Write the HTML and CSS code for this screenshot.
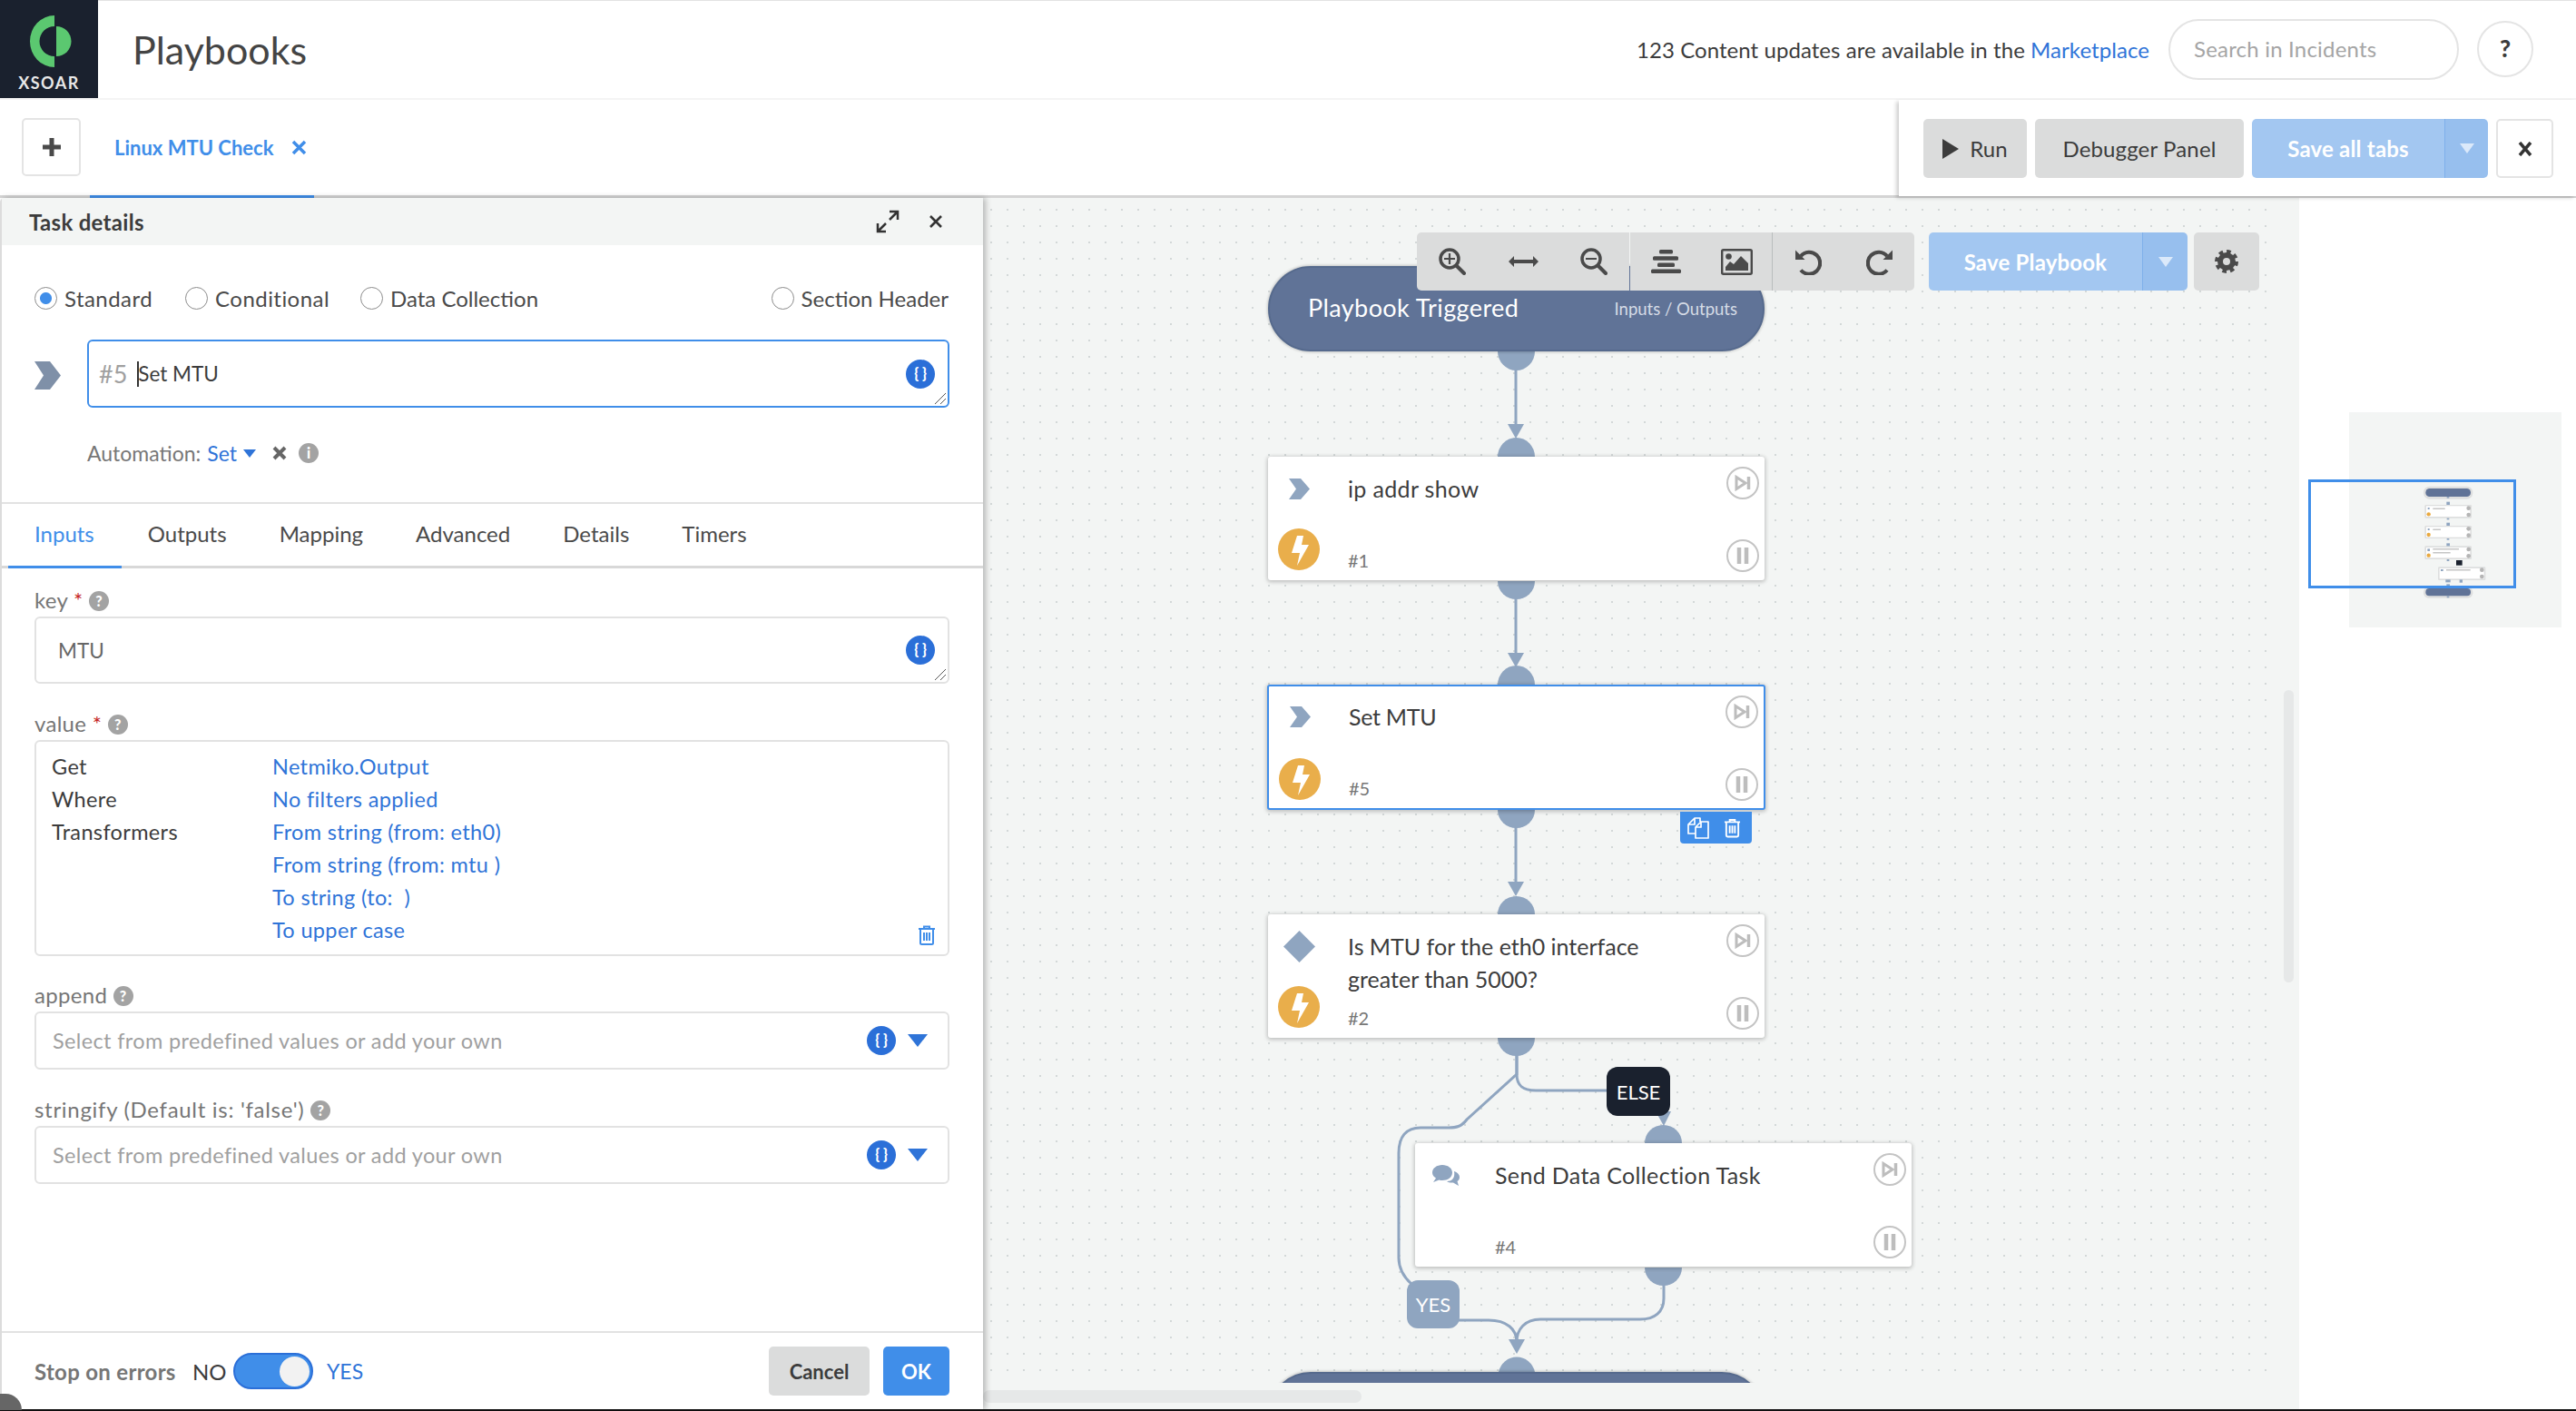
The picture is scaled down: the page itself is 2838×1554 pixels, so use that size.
FILE: index.html
```html
<!DOCTYPE html>
<html lang="en">
<head>
    <meta charset="UTF-8">
    <title>Playbooks</title>
    <link rel="stylesheet" href="styles.css">
</head>
<body>

<!-- Top bar -->
<header class="topbar">
    <div class="logo">
        <svg width="108" height="78" viewBox="0 0 108 78">
            <path fill="#5bc870" d="M60 17A27 28.500 0 0 0 60 74V62A16.500 16.500 0 0 1 60 29Z"/>
            <path fill="#5bc870" d="M62 29A16.500 16.500 0 0 1 62 62Z"/>
        </svg>
        <span class="logo-text">XSOAR</span>
    </div>
    <h1 class="page-title">Playbooks</h1>
    <div class="updates">123 Content updates are available in the <a class="link">Marketplace</a></div>
    <div class="search">Search in Incidents</div>
    <div class="help-btn">?</div>
</header>

<!-- Tabs and run buttons -->
<div class="tabbar">
    <button class="add-tab">
        <svg width="20" height="20" viewBox="0 0 20 20"><path fill="#4a4a4a" d="M7.500 0h5v7.500H20v5h-7.500V20h-5v-7.500H0v-5h7.500z"/></svg>
    </button>
    <div class="tab">
        <span>Linux MTU Check</span>
        <svg width="17" height="17" viewBox="0 0 17 17"><path stroke="#408ee9" stroke-width="3.500" d="M2 2l13 13M15 2L2 15"/></svg>
    </div>
    <div class="run-panel">
        <button class="btn btn-gray btn-run">
            <svg width="18" height="22" viewBox="0 0 18 22"><path fill="#3c3c3c" d="M0 0l18 11L0 22z"/></svg>
            Run
        </button>
        <button class="btn btn-gray btn-debug">Debugger Panel</button>
        <div class="split split-tabs">
            <button class="split-main">Save all tabs</button>
            <button class="split-arrow"><i class="caret caret-white"></i></button>
        </div>
        <button class="close-btn">
            <svg width="16" height="16" viewBox="0 0 16 16"><path stroke="#333" stroke-width="3.500" d="M2 1l12 14M14 1L2 15"/></svg>
        </button>
    </div>
</div>

<div class="workspace">

    <!-- Task details panel -->
    <section class="task-panel">
        <div class="task-head">
            <span>Task details</span>
            <svg class="head-icon" width="26" height="26" viewBox="0 0 26 26"><path fill="none" stroke="#333" stroke-width="2.500" d="M15 2h9v9M24 2L15 11M11 24H2v-9M2 24l9-9"/></svg>
            <svg class="head-icon" width="16" height="16" viewBox="0 0 16 16"><path stroke="#333" stroke-width="2.600" d="M2 2l12 12M14 2L2 14"/></svg>
        </div>

        <div class="type-row">
            <label class="radio radio-on"><i></i>Standard</label>
            <label class="radio"><i></i>Conditional</label>
            <label class="radio radio-data"><i></i>Data Collection</label>
            <label class="radio radio-last"><i></i>Section Header</label>
        </div>

        <div class="title-row">
            <svg width="29" height="31" viewBox="0 0 29 31"><path fill="#7f90a8" d="M0 0h17l12 15.500L17 31H0l10-15.500z"/></svg>
            <div class="input input-title">
                <span class="task-no">#5</span><span class="caret-line"></span><span>Set MTU</span>
                <span class="code-btn">{ }</span>
                <svg class="resize" width="14" height="14" viewBox="0 0 14 14"><path stroke="#555" d="M13 1L1 13M13 7l-6 6"/></svg>
            </div>
        </div>

        <div class="automation">
            <span>Automation:</span> <a class="link">Set</a>
            <i class="caret caret-small"></i>
            <svg width="16" height="16" viewBox="0 0 16 16"><path stroke="#666" stroke-width="4" d="M2 2l12 12M14 2L2 14"/></svg>
            <span class="hint">i</span>
        </div>

        <nav class="task-tabs">
            <a class="task-tab task-tab-on">Inputs</a>
            <a class="task-tab">Outputs</a>
            <a class="task-tab">Mapping</a>
            <a class="task-tab">Advanced</a>
            <a class="task-tab">Details</a>
            <a class="task-tab">Timers</a>
        </nav>

        <div class="fields">
            <div class="field">
                <div class="field-label">key <b>*</b> <span class="hint">?</span></div>
                <div class="input input-key">
                    <span>MTU</span>
                    <span class="code-btn">{ }</span>
                    <svg class="resize" width="14" height="14" viewBox="0 0 14 14"><path stroke="#555" d="M13 1L1 13M13 7l-6 6"/></svg>
                </div>
            </div>

            <div class="field field-tight">
                <div class="field-label">value <b>*</b> <span class="hint">?</span></div>
                <div class="value-box">
                    <div class="value-row"><span>Get</span><a class="link">Netmiko.Output</a></div>
                    <div class="value-row"><span>Where</span><a class="link">No filters applied</a></div>
                    <div class="value-row"><span>Transformers</span><a class="link">From string (from: eth0)</a></div>
                    <div class="value-row"><span></span><a class="link">From string (from: mtu )</a></div>
                    <div class="value-row"><span></span><a class="link">To string (to:&nbsp; )</a></div>
                    <div class="value-row"><span></span><a class="link">To upper case</a></div>
                    <svg class="value-trash" width="20" height="22" viewBox="0 0 20 22"><path fill="none" stroke="#408ee9" stroke-width="2" d="M1 4h18M7 4V1.500h6V4M3 4v15.500q0 1.500 1.500 1.500h11q1.500 0 1.500-1.500V4M7 8v9M10 8v9M13 8v9"/></svg>
                </div>
            </div>

            <div class="field">
                <div class="field-label">append <span class="hint">?</span></div>
                <div class="input input-select">
                    <span class="placeholder">Select from predefined values or add your own</span>
                    <span class="code-btn">{ }</span>
                    <i class="caret caret-blue"></i>
                </div>
            </div>

            <div class="field">
                <div class="field-label field-label-long">stringify (Default is: 'false') <span class="hint">?</span></div>
                <div class="input input-select">
                    <span class="placeholder">Select from predefined values or add your own</span>
                    <span class="code-btn">{ }</span>
                    <i class="caret caret-blue"></i>
                </div>
            </div>
        </div>

        <div class="task-foot">
            <span class="stop-label">Stop on errors</span>
            <span class="no-label">NO</span>
            <span class="toggle"><i></i></span>
            <a class="link yes-label">YES</a>
            <button class="btn btn-gray btn-cancel">Cancel</button>
            <button class="btn btn-ok">OK</button>
        </div>
    </section>

    <!-- Playbook canvas -->
    <main class="canvas">
        <div class="graph">
            <svg class="wires" width="1450" height="1305" viewBox="1083 218 1450 1305">
                <g fill="none" stroke="#8fa5c0" stroke-width="3">
                    <path d="M1670 405V470"/>
                    <path d="M1670 655V722"/>
                    <path d="M1670 908V974"/>
                    <path d="M1671 1160V1183C1671 1195 1677 1201 1692 1201H1772"/>
                    <path d="M1671 1160V1183L1616 1233C1610 1241 1604 1242 1596 1242H1565C1549 1242 1541 1252 1541 1270V1385C1541 1397 1546 1406 1555 1414"/>
                    <path d="M1605 1454H1640C1660 1454 1671 1464 1671 1478"/>
                    <path d="M1833 1412V1430C1833 1445 1823 1453 1807 1453H1697C1680 1453 1671 1464 1671 1478"/>
                </g>
                <g fill="#8fa5c0">
                    <path d="M1650 387H1691A20.500 21 0 0 1 1650 387Z"/>
                    <path d="M1650 503A20.500 21 0 0 1 1691 503Z"/>
                    <path d="M1650 640H1691A20.500 20 0 0 1 1650 640Z"/>
                    <path d="M1650 754A20.500 21 0 0 1 1691 754Z"/>
                    <path d="M1650 892H1691A20.500 20 0 0 1 1650 892Z"/>
                    <path d="M1650 1007A20.500 20 0 0 1 1691 1007Z"/>
                    <path d="M1650 1143H1691A20.500 20 0 0 1 1650 1143Z"/>
                    <path d="M1812 1259A20.500 20 0 0 1 1853 1259Z"/>
                    <path d="M1812 1396H1853A20.500 20 0 0 1 1812 1396Z"/>
                    <path d="M1651 1511A20.500 21 0 0 1 1691 1511Z"/>
                    <path d="M1661 467H1679L1670 483Z"/>
                    <path d="M1661 719H1679L1670 735Z"/>
                    <path d="M1661 971H1679L1670 987Z"/>
                    <path d="M1662 1475H1680L1671 1491Z"/>
                    <path d="M1824 1224H1841L1833 1240Z"/>
                </g>
            </svg>

            <div class="pill pill-start">
                <span class="pill-title">Playbook Triggered</span>
                <span class="pill-link">Inputs / Outputs</span>
            </div>

            <div class="node node-1">
                <div class="node-left">
                    <svg width="23" height="23" viewBox="0 0 23 23"><path fill="#8fa5c0" d="M0 0h13l10 11.500L13 23H0l8-11.500z"/></svg>
                    <span class="bolt"><svg width="46" height="46" viewBox="0 0 46 46"><path fill="#fff" d="M21 8h7l-2 10h8L21 41l3-14h-9z"/></svg></span>
                </div>
                <div class="node-main"><div class="node-title">ip addr show</div><div class="node-no">#1</div></div>
                <div class="node-right">
                    <span class="round"><svg width="18" height="18" viewBox="0 0 18 18"><path fill="none" stroke="#bdbdbd" stroke-width="3" d="M2 2.500L12 9 2 15.500z"/><path stroke="#bdbdbd" stroke-width="3.500" d="M15.500 2v14"/></svg></span>
                    <span class="round"><svg width="14" height="18" viewBox="0 0 14 18"><path stroke="#bdbdbd" stroke-width="4.500" d="M3 0v18M11 0v18"/></svg></span>
                </div>
            </div>

            <div class="node node-2 node-on">
                <div class="node-left">
                    <svg width="23" height="23" viewBox="0 0 23 23"><path fill="#8fa5c0" d="M0 0h13l10 11.500L13 23H0l8-11.500z"/></svg>
                    <span class="bolt"><svg width="46" height="46" viewBox="0 0 46 46"><path fill="#fff" d="M21 8h7l-2 10h8L21 41l3-14h-9z"/></svg></span>
                </div>
                <div class="node-main"><div class="node-title">Set MTU</div><div class="node-no">#5</div></div>
                <div class="node-right">
                    <span class="round"><svg width="18" height="18" viewBox="0 0 18 18"><path fill="none" stroke="#bdbdbd" stroke-width="3" d="M2 2.500L12 9 2 15.500z"/><path stroke="#bdbdbd" stroke-width="3.500" d="M15.500 2v14"/></svg></span>
                    <span class="round"><svg width="14" height="18" viewBox="0 0 14 18"><path stroke="#bdbdbd" stroke-width="4.500" d="M3 0v18M11 0v18"/></svg></span>
                </div>
            </div>

            <div class="node-actions">
                <svg width="24" height="24" viewBox="0 0 24 24"><path fill="none" stroke="#fff" stroke-width="1.700" stroke-linejoin="round" d="M9 18H1V8l7-7h6v4M8 1v7H1M9 23V11l6-6h8v18zM15 5v6H9"/></svg>
                <svg width="19" height="22" viewBox="0 0 20 22"><path fill="none" stroke="#fff" stroke-width="2" d="M1 4h18M7 4V1.500h6V4M3 4v15.500q0 1.500 1.500 1.500h11q1.500 0 1.500-1.500V4M7 8v9M10 8v9M13 8v9"/></svg>
            </div>

            <div class="node node-3">
                <div class="node-left">
                    <svg width="35" height="35" viewBox="0 0 35 35"><path fill="#8fa5c0" d="M17.500 0L35 17.500 17.500 35 0 17.500z"/></svg>
                    <span class="bolt"><svg width="46" height="46" viewBox="0 0 46 46"><path fill="#fff" d="M21 8h7l-2 10h8L21 41l3-14h-9z"/></svg></span>
                </div>
                <div class="node-main"><div class="node-title">Is MTU for the eth0 interface greater than 5000?</div><div class="node-no">#2</div></div>
                <div class="node-right">
                    <span class="round"><svg width="18" height="18" viewBox="0 0 18 18"><path fill="none" stroke="#bdbdbd" stroke-width="3" d="M2 2.500L12 9 2 15.500z"/><path stroke="#bdbdbd" stroke-width="3.500" d="M15.500 2v14"/></svg></span>
                    <span class="round"><svg width="14" height="18" viewBox="0 0 14 18"><path stroke="#bdbdbd" stroke-width="4.500" d="M3 0v18M11 0v18"/></svg></span>
                </div>
            </div>

            <div class="node node-4">
                <div class="node-left">
                    <svg width="30" height="24" viewBox="0 0 30 24"><path fill="#8fa5c0" d="M11 0c6 0 11 3.500 11 8.500S17 17 11 17c-1.500 0-2.500 0-3.500-.5L1 19l3-4.500C1.500 13 0 11 0 8.500 0 3.500 5 0 11 0z"/><path fill="#8fa5c0" d="M24 7c3.500 1 6 3.500 6 6.500 0 2-1 3.500-2.500 4.500l1.500 5-6-3.500c-2 .3-5.500 0-7-1.500 5 0 9.500-3 8-11z"/></svg>
                </div>
                <div class="node-main"><div class="node-title">Send Data Collection Task</div><div class="node-no">#4</div></div>
                <div class="node-right">
                    <span class="round"><svg width="18" height="18" viewBox="0 0 18 18"><path fill="none" stroke="#bdbdbd" stroke-width="3" d="M2 2.500L12 9 2 15.500z"/><path stroke="#bdbdbd" stroke-width="3.500" d="M15.500 2v14"/></svg></span>
                    <span class="round"><svg width="14" height="18" viewBox="0 0 14 18"><path stroke="#bdbdbd" stroke-width="4.500" d="M3 0v18M11 0v18"/></svg></span>
                </div>
            </div>

            <div class="edge-tag edge-else">ELSE</div>
            <div class="edge-tag edge-yes">YES</div>

            <div class="pill pill-end"></div>

            <!-- Canvas buttons -->
            <div class="tools">
                <div class="tool-group tool-group-a">
                    <span class="tool"><svg width="30" height="30" viewBox="0 0 30 30"><circle cx="12" cy="12" r="10" fill="none" stroke="#4a4a4a" stroke-width="3.500"/><path stroke="#4a4a4a" stroke-width="4" stroke-linecap="round" d="M20 20l8 8"/><path stroke="#4a4a4a" stroke-width="2.200" d="M6 12h12M12 6v12"/></svg></span>
                    <span class="tool"><svg width="33" height="12" viewBox="0 0 33 12"><path fill="#4a4a4a" d="M0 6l6-6v4h21V0l6 6-6 6V8H6v4z"/></svg></span>
                    <span class="tool"><svg width="30" height="30" viewBox="0 0 30 30"><circle cx="12" cy="12" r="10" fill="none" stroke="#4a4a4a" stroke-width="3.500"/><path stroke="#4a4a4a" stroke-width="4" stroke-linecap="round" d="M20 20l8 8"/><path stroke="#4a4a4a" stroke-width="2.200" d="M6 12h12"/></svg></span>
                </div>
                <div class="tool-group tool-group-b">
                    <span class="tool"><svg width="33" height="26" viewBox="0 0 33 26"><g fill="#4a4a4a"><rect x="9" y="0" width="15" height="4.500" rx="1.500"/><rect x="2" y="7.300" width="28" height="4.500" rx="1.500"/><rect x="7" y="14.400" width="19" height="4.500" rx="1.500"/><rect x="0" y="21.500" width="33" height="4.500" rx="1.500"/></g></svg></span>
                    <span class="tool"><svg width="35" height="29" viewBox="0 0 35 29"><rect x="1.200" y="1.200" width="32.600" height="26.600" rx="1.500" fill="none" stroke="#4a4a4a" stroke-width="2.400"/><circle cx="8.500" cy="8.500" r="3.300" fill="#4a4a4a"/><path fill="#4a4a4a" d="M5 24v-4l5-6 4 3 8-9 8 8v8z"/></svg></span>
                </div>
                <div class="tool-group">
                    <span class="tool"><svg width="29" height="29" viewBox="0 0 29 29"><path fill="none" stroke="#4a4a4a" stroke-width="4.200" d="M6 8A12 12 0 1 1 6 23.500"/><path fill="#4a4a4a" d="M0 1.500V12h10.500z"/></svg></span>
                    <span class="tool"><svg width="29" height="29" viewBox="0 0 29 29"><path fill="none" stroke="#4a4a4a" stroke-width="4.200" d="M23 8A12 12 0 1 0 23 23.500"/><path fill="#4a4a4a" d="M29 1.500V12H18.500z"/></svg></span>
                </div>
            </div>
            <div class="split split-save">
                <button class="split-main">Save Playbook</button>
                <button class="split-arrow"><i class="caret caret-white"></i></button>
            </div>
            <button class="gear">
                <svg width="26" height="26" viewBox="0 0 26 26"><circle cx="13" cy="13" r="7" fill="none" stroke="#4a4a4a" stroke-width="6"/><circle cx="13" cy="13" r="11" fill="none" stroke="#4a4a4a" stroke-width="4" stroke-dasharray="4.600 4"/></svg>
            </button>
        </div>
        <div class="scroll-v"></div>
        <div class="scroll-h"></div>
    </main>

    <!-- Minimap -->
    <aside class="minimap">
        <div class="mini-box">
            <svg width="234" height="237" viewBox="264 102 702 711">
                <g fill="#dedfdf">
                    <rect x="510" y="347" width="163" height="42" rx="20"/>
                    <rect x="514" y="408" width="155" height="44" rx="4"/>
                    <rect x="514" y="477" width="155" height="42" rx="4"/>
                    <rect x="514" y="544" width="155" height="44" rx="4"/>
                    <rect x="558" y="613" width="157" height="44" rx="4"/>
                    <rect x="510" y="680" width="163" height="36" rx="16"/>
                </g>
                <g fill="#607397">
                    <rect x="517" y="354" width="149" height="27" rx="13"/>
                    <rect x="517" y="684" width="149" height="25" rx="12"/>
                </g>
                <g fill="#fff">
                    <rect x="519" y="412" width="145" height="35"/>
                    <rect x="519" y="481" width="145" height="34"/>
                    <rect x="519" y="549" width="145" height="34"/>
                    <rect x="563" y="618" width="147" height="34"/>
                </g>
                <g fill="#b5b5b5">
                    <circle cx="659" cy="419" r="7"/><circle cx="659" cy="441" r="7"/>
                    <circle cx="659" cy="487" r="7"/><circle cx="659" cy="509" r="7"/>
                    <circle cx="659" cy="555" r="7"/><circle cx="659" cy="577" r="7"/>
                    <circle cx="703" cy="623" r="7"/><circle cx="703" cy="645" r="7"/>
                </g>
                <g fill="#e9a93f">
                    <circle cx="527" cy="439" r="6.500"/><circle cx="527" cy="507" r="6.500"/><circle cx="527" cy="575" r="6.500"/>
                </g>
                <g fill="#8fa5c0">
                    <rect x="524" y="417" width="6" height="6"/><rect x="524" y="486" width="6" height="6"/><rect x="523" y="553" width="8" height="8"/><rect x="567" y="621" width="8" height="6"/>
                    <rect x="586" y="398" width="11" height="10"/><rect x="586" y="467" width="11" height="10"/><rect x="586" y="535" width="11" height="9"/>
                    <rect x="583" y="655" width="16" height="9"/><rect x="629" y="655" width="10" height="10"/><rect x="586" y="670" width="11" height="10"/>
                    <rect x="587" y="381" width="8" height="5"/><rect x="587" y="452" width="8" height="5"/><rect x="587" y="519" width="8" height="5"/><rect x="587" y="588" width="8" height="6"/><rect x="587" y="709" width="8" height="6"/>
                </g>
                <g fill="#a9a9a9">
                    <rect x="541" y="419" width="40" height="3"/><rect x="541" y="488" width="26" height="3"/><rect x="541" y="553" width="86" height="3"/><rect x="541" y="565" width="58" height="3"/><rect x="585" y="622" width="80" height="3"/>
                </g>
                <rect x="618" y="591" width="20" height="17" fill="#1a212e"/>
            </svg>
        </div>
        <div class="mini-view"></div>
    </aside>
</div>

<div class="bottom-edge"></div>
<div class="window-corner"></div>

</body>
</html>
```

FILE: styles.css
```css
* {
    box-sizing: border-box;
}

html, body {
    margin: 0;
    height: 1554px;
    overflow: hidden;
}

body {
    font-family: "Lato", "Liberation Sans", sans-serif;
    font-size: 24px;
    color: #3c3c3c;
    background-color: #fff;
    display: flex;
    flex-direction: column;
    position: relative;
}

button {
    font-family: inherit;
    border: none;
    cursor: pointer;
    padding: 0;
}

.link {
    color: #2f74d8;
    text-decoration: none;
}

/* Top bar */
.topbar {
    height: 110px;
    flex-shrink: 0;
    display: flex;
    align-items: center;
    border-top: 1px solid #e2e2e2;
    border-bottom: 2px solid #f4f4f4;
    padding-bottom: 1px;
}

.logo {
    width: 108px;
    height: 108px;
    margin-top: -1px;
    background-color: #1a212e;
    display: flex;
    flex-direction: column;
    align-items: center;
    align-self: flex-start;
}

.logo svg {
    flex-shrink: 0;
}

.logo-text {
    color: #e8e8e8;
    font-size: 18px;
    font-weight: 700;
    letter-spacing: 1.500px;
    margin-top: 2px;
}

.page-title {
    margin: 0 0 0 38px;
    font-size: 43px;
    font-weight: 400;
    color: #444;
    flex: 1;
}

.updates {
    font-size: 24px;
    letter-spacing: 0.06px;
    margin-right: 21px;
}

.search {
    width: 320px;
    height: 67px;
    border: 2px solid #e4e4e4;
    border-radius: 34px;
    padding-left: 26px;
    line-height: 62px;
    color: #a5a5a5;
    font-size: 24px;
    letter-spacing: 0.2px;
}

.help-btn {
    width: 62px;
    height: 62px;
    margin: 0 47px 0 20px;
    border: 2px solid #e4e4e4;
    border-radius: 50%;
    text-align: center;
    line-height: 56px;
    font-weight: 900;
    font-size: 26px;
}

/* Tabs */
.tabbar {
    height: 108px;
    flex-shrink: 0;
    display: flex;
    align-items: flex-start;
    border-bottom: 3px solid #d4d4d4;
    position: relative;
}

.add-tab {
    width: 65px;
    height: 64px;
    margin: 20px 0 0 24px;
    background-color: #fff;
    border: 2px solid #e4e4e4;
    border-radius: 5px;
    display: flex;
    align-items: center;
    justify-content: center;
}

.tab {
    width: 247px;
    height: 108px;
    margin-left: 10px;
    padding-left: 27px;
    display: flex;
    align-items: center;
    gap: 20px;
    color: #408ee9;
    font-size: 22px;
    font-weight: 700;
    border-bottom: 3px solid #408ee9;
}

.run-panel {
    margin-left: auto;
    width: 746px;
    height: 106px;
    padding: 21px 25px 0 27px;
    background-color: #fff;
    display: flex;
    align-items: flex-start;
    box-shadow: -3px 2px 4px rgba(0, 0, 0, 0.18);
    z-index: 3;
    position: relative;
}

.btn {
    border-radius: 5px;
    font-size: 24px;
    height: 65px;
}

.btn-gray {
    background-color: #dbdcdc;
    color: #3c3c3c;
}

.btn-run {
    width: 114px;
    display: flex;
    align-items: center;
    justify-content: center;
    gap: 12px;
}

.btn-debug {
    width: 230px;
    margin: 0 9px;
    letter-spacing: 0.15px;
}

.split {
    display: flex;
    border-radius: 5px;
    overflow: hidden;
}

.split-main {
    background-color: #a3c7f1;
    color: #fff;
    font-size: 24px;
    font-weight: 700;
    letter-spacing: 0.2px;
}

.split-arrow {
    background-color: #97bfee;
    border-left: 1px solid #7fb0ea;
    display: flex;
    align-items: center;
    justify-content: center;
}

.split-tabs {
    width: 260px;
    height: 65px;
}

.split-tabs .split-main {
    width: 212px;
}

.split-tabs .split-arrow {
    width: 48px;
}

.close-btn {
    width: 63px;
    height: 65px;
    margin-left: 9px;
    background-color: #fff;
    border: 2px solid #e4e4e4;
    border-radius: 5px;
    display: flex;
    align-items: center;
    justify-content: center;
}

.caret {
    display: inline-block;
    width: 0;
    height: 0;
    border-left: 8px solid transparent;
    border-right: 8px solid transparent;
    border-top: 11px solid #fff;
}

.caret-white {
    border-top-color: #dbe9fa;
}

.caret-blue {
    border-left-width: 11px;
    border-right-width: 11px;
    border-top: 14px solid #2f74d8;
}

.caret-small {
    border-left-width: 7px;
    border-right-width: 7px;
    border-top: 9px solid #2f74d8;
}

/* Main area */
.workspace {
    flex: 1;
    display: flex;
    min-height: 0;
}

/* Task panel */
.task-panel {
    width: 1083px;
    flex-shrink: 0;
    display: flex;
    flex-direction: column;
    background-color: #fff;
    border-left: 2px solid #dcdcdc;
    border-top-left-radius: 5px;
    box-shadow: 3px 0 6px rgba(0, 0, 0, 0.25);
    z-index: 2;
}

.task-head {
    height: 52px;
    flex-shrink: 0;
    background-color: #f3f5f4;
    display: flex;
    align-items: center;
    padding: 0 44px 0 30px;
    font-weight: 700;
    font-size: 24px;
    gap: 32px;
}

.task-head span {
    flex: 1;
    letter-spacing: 0.3px;
}

.type-row {
    display: flex;
    align-items: center;
    height: 26px;
    margin: 45px 38px 0 36px;
    gap: 36px;
}

.radio {
    display: flex;
    align-items: center;
    gap: 8px;
    font-size: 24px;
    color: #4a4a4a;
    letter-spacing: 0.45px;
}

.radio i {
    width: 25px;
    height: 25px;
    border: 1px solid #8c8c8c;
    border-radius: 50%;
    flex-shrink: 0;
}

.radio-on i {
    background: radial-gradient(circle, #408ee9 0 6px, #fff 7px);
}

.radio-data {
    margin-left: -2px;
    letter-spacing: 0;
}

.radio-last {
    margin-left: auto;
    letter-spacing: 0;
}

.title-row {
    display: flex;
    align-items: flex-start;
    margin: 33px 37px 0 36px;
    gap: 29px;
}

.title-row svg:first-child {
    flex-shrink: 0;
    margin-top: 24px;
}

.input {
    position: relative;
    border: 2px solid #e2e2e2;
    border-radius: 6px;
    background-color: #fff;
    display: flex;
    align-items: center;
    font-size: 22.500px;
}

.input-title {
    flex: 1;
    height: 75px;
    border-color: #408ee9;
    padding: 0 0 0 11px;
}

.task-no {
    color: #a0a0a0;
    font-size: 27px;
    margin-right: 11px;
}

.caret-line {
    width: 2px;
    height: 28px;
    background-color: #333;
    margin-right: -1px;
}

.code-btn {
    width: 32px;
    height: 32px;
    border-radius: 50%;
    background-color: #2b6fd8;
    color: #fff;
    font-size: 16px;
    font-weight: 900;
    line-height: 30px;
    text-align: center;
    white-space: nowrap;
    flex-shrink: 0;
    margin-left: auto;
    margin-right: 14px;
}

.resize {
    position: absolute;
    right: 1px;
    bottom: 1px;
}

.automation {
    display: flex;
    align-items: center;
    gap: 7px;
    height: 30px;
    margin: 35px 0 0 94px;
    font-size: 23px;
    color: #777;
}

.automation .caret {
    margin: 0 11px 0 0;
}

.hint {
    width: 22px;
    height: 22px;
    border-radius: 50%;
    background-color: #a3a3a3;
    color: #fff;
    display: inline-block;
    text-align: center;
    font-size: 16px;
    font-weight: 900;
    line-height: 22px;
    vertical-align: 2px;
    letter-spacing: 0;
}

.automation .hint {
    margin-left: 6px;
}

.task-tabs {
    margin-top: 39px;
    height: 73px;
    flex-shrink: 0;
    display: flex;
    border-top: 2px solid #e2e2e2;
    border-bottom: 3px solid #d8d8d8;
    padding-left: 7px;
}

.task-tab {
    height: 71px;
    line-height: 66px;
    padding: 0 29px;
    color: #4a4a4a;
    font-size: 24px;
}

.task-tab-on {
    color: #408ee9;
    border-bottom: 3px solid #408ee9;
    padding-right: 30px;
}

.fields {
    padding: 20px 37px 0 36px;
}

.field {
    margin-bottom: 29px;
}

.field-tight {
    margin-bottom: 28px;
}

.field-label {
    height: 30px;
    line-height: 30px;
    margin-bottom: 3px;
    color: #767676;
    font-size: 24px;
    letter-spacing: 0.3px;
}

.field-label-long {
    letter-spacing: 0.7px;
}

.field-label b {
    color: #c62828;
    font-weight: 400;
}

.input-key {
    height: 74px;
    padding-left: 24px;
    color: #666;
}

.input-select {
    height: 64px;
    padding-left: 18px;
}

.input-select .code-btn {
    margin-right: 13px;
}

.input-select .caret {
    margin-right: 22px;
}

.placeholder {
    color: #a0a0a0;
    font-size: 23.500px;
    letter-spacing: 0.36px;
}

.value-box {
    position: relative;
    height: 238px;
    border: 2px solid #e2e2e2;
    border-radius: 6px;
    padding: 9px 0 0 17px;
}

.value-row {
    display: flex;
    height: 36px;
    line-height: 36px;
    font-size: 23.500px;
    letter-spacing: 0.35px;
}

.value-row span {
    width: 243px;
    flex-shrink: 0;
}

.value-trash {
    position: absolute;
    right: 13px;
    bottom: 10px;
}

.task-foot {
    margin-top: auto;
    height: 86px;
    flex-shrink: 0;
    border-top: 2px solid #e2e2e2;
    display: flex;
    align-items: center;
    padding: 0 37px 0 36px;
}

.stop-label {
    color: #767676;
    font-weight: 700;
    font-size: 24px;
    letter-spacing: 0.3px;
    width: 174px;
    white-space: nowrap;
}

.no-label {
    width: 45px;
}

.toggle {
    width: 88px;
    height: 40px;
    border-radius: 20px;
    background-color: #408ee9;
    border: 2px solid #2b6fd8;
    display: flex;
    justify-content: flex-end;
    align-items: center;
    padding-right: 2px;
    margin-right: 15px;
}

.toggle i {
    width: 33px;
    height: 33px;
    border-radius: 50%;
    background-color: #f2f2f2;
}

.yes-label {
    font-size: 23px;
}

.btn-cancel {
    margin-left: auto;
    width: 111px;
    height: 54px;
    font-weight: 700;
    font-size: 22px;
}

.btn-ok {
    margin-left: 15px;
    width: 73px;
    height: 54px;
    background-color: #408ee9;
    color: #fff;
    font-weight: 700;
    font-size: 22px;
}

/* Canvas */
.canvas {
    width: 1450px;
    flex-shrink: 0;
    background-color: #f3f5f4;
    position: relative;
}

.graph {
    width: 1417px;
    height: 1305px;
    position: relative;
    overflow: hidden;
    background-image: radial-gradient(circle, #d3d8d8 0 1.200px, transparent 1.500px);
    background-size: 18px 18px;
    background-position: 0 4px;
}

.wires {
    position: absolute;
    left: 0;
    top: 0;
}

.pill {
    position: absolute;
    left: 314px;
    width: 547px;
    height: 94px;
    border-radius: 47px;
    background-color: #607397;
    border: 2px solid #566a8d;
    box-shadow: 0 0 3px 1px rgba(0, 0, 0, 0.2);
    color: #fff;
}

.pill-start {
    top: 75px;
    display: flex;
    align-items: flex-start;
    justify-content: space-between;
    padding: 27px 28px 0 42px;
}

.pill-end {
    top: 1293px;
}

.pill-title {
    font-size: 27px;
    letter-spacing: 0.4px;
}

.pill-link {
    font-size: 18.500px;
    color: #d6dce6;
    margin-top: 7px;
}

.node {
    position: absolute;
    width: 547px;
    height: 136px;
    background-color: #fff;
    border-radius: 3px;
    box-shadow: 0 1px 4px 1px rgba(0, 0, 0, 0.22);
    display: flex;
}

.node-1 {
    left: 314px;
    top: 285px;
}

.node-2 {
    left: 314px;
    top: 536px;
}

.node-3 {
    left: 314px;
    top: 789px;
}

.node-4 {
    left: 476px;
    top: 1041px;
}

.node-on {
    border: 2px solid #408ee9;
    margin-left: -1px;
    width: 549px;
    height: 138px;
}

.node-left {
    width: 68px;
    flex-shrink: 0;
    display: flex;
    flex-direction: column;
    align-items: center;
    justify-content: space-between;
    padding: 24px 0 11px;
}

.node-on .node-left {
    padding: 22px 0 9px;
}

.node-3 .node-left {
    padding-top: 18px;
}

.node-4 .node-left {
    justify-content: flex-start;
    padding-top: 24px;
}

.bolt {
    width: 46px;
    height: 46px;
    border-radius: 50%;
    background-color: #e9ae4b;
    display: block;
}

.bolt svg {
    display: block;
}

.node-main {
    flex: 1;
    margin-left: 20px;
    padding: 17px 0 10px;
    display: flex;
    flex-direction: column;
    justify-content: space-between;
}

.node-on .node-main {
    padding-top: 15px;
}

.node-title {
    font-size: 25px;
    line-height: 36px;
    width: 380px;
}

.node-1 .node-title,
.node-4 .node-title {
    letter-spacing: 0.35px;
}

.node-2 .node-title {
    letter-spacing: -0.3px;
}

.node-no {
    font-size: 20px;
    line-height: 24px;
    color: #767676;
}

.node-right {
    width: 42px;
    flex-shrink: 0;
    display: flex;
    flex-direction: column;
    justify-content: space-between;
    padding: 11px 0 9px 0;
}

.node-on .node-right {
    padding: 10px 0 8px 0;
}

.round {
    width: 36px;
    height: 36px;
    border: 2px solid #c4c4c4;
    border-radius: 50%;
    display: flex;
    align-items: center;
    justify-content: center;
}

.node-actions {
    position: absolute;
    left: 768px;
    top: 676px;
    width: 79px;
    height: 35px;
    background-color: #408ee9;
    border-radius: 0 0 4px 4px;
    display: flex;
    align-items: center;
    justify-content: space-between;
    padding: 0 12px 0 8px;
}

.edge-tag {
    position: absolute;
    display: flex;
    align-items: center;
    justify-content: center;
    border-radius: 12px;
    color: #fff;
    font-size: 22px;
}

.edge-else {
    left: 687px;
    top: 957px;
    width: 70px;
    height: 54px;
    background-color: #1a212e;
}

.edge-yes {
    left: 467px;
    top: 1192px;
    width: 58px;
    height: 53px;
    background-color: #8fa5c0;
}

/* Buttons floating over the canvas */
.tools {
    position: absolute;
    left: 478px;
    top: 38px;
    height: 64px;
    display: flex;
    border-radius: 5px;
    overflow: hidden;
}

.tool-group {
    display: flex;
    background-color: #dbdcdc;
}

.tool-group-a {
    margin-right: 1px;
}

.tool-group-b {
    border-right: 1px solid #b9bdbe;
}

.tool {
    width: 78px;
    display: flex;
    align-items: center;
    justify-content: center;
}

.split-save {
    position: absolute;
    left: 1042px;
    top: 38px;
    width: 285px;
    height: 64px;
}

.split-save .split-main {
    width: 235px;
}

.split-save .split-arrow {
    width: 50px;
}

.gear {
    position: absolute;
    left: 1334px;
    top: 38px;
    width: 72px;
    height: 64px;
    background-color: #dbdcdc;
    border-radius: 5px;
    display: flex;
    align-items: center;
    justify-content: center;
}

.scroll-v {
    position: absolute;
    left: 1433px;
    top: 542px;
    width: 11px;
    height: 322px;
    border-radius: 6px;
    background-color: #e6e8e8;
}

.scroll-h {
    position: absolute;
    left: 0;
    top: 1313px;
    width: 417px;
    height: 14px;
    border-radius: 7px;
    background-color: #e6e8e8;
}

/* Minimap */
.minimap {
    flex: 1;
    background-color: #fff;
    position: relative;
}

.mini-box {
    position: absolute;
    left: 55px;
    top: 236px;
    width: 234px;
    height: 237px;
    background-color: #f3f5f4;
}

.mini-box svg {
    display: block;
    filter: blur(0.5px);
}

.mini-view {
    position: absolute;
    left: 10px;
    top: 310px;
    width: 229px;
    height: 120px;
    border: 3px solid #408ee9;
}

.bottom-edge {
    height: 2px;
    flex-shrink: 0;
    background-color: #111;
}

.window-corner {
    position: absolute;
    left: 0;
    top: 1535px;
    width: 24px;
    height: 18px;
    background-color: #666;
    border-top-right-radius: 18px;
    z-index: 5;
}
```
